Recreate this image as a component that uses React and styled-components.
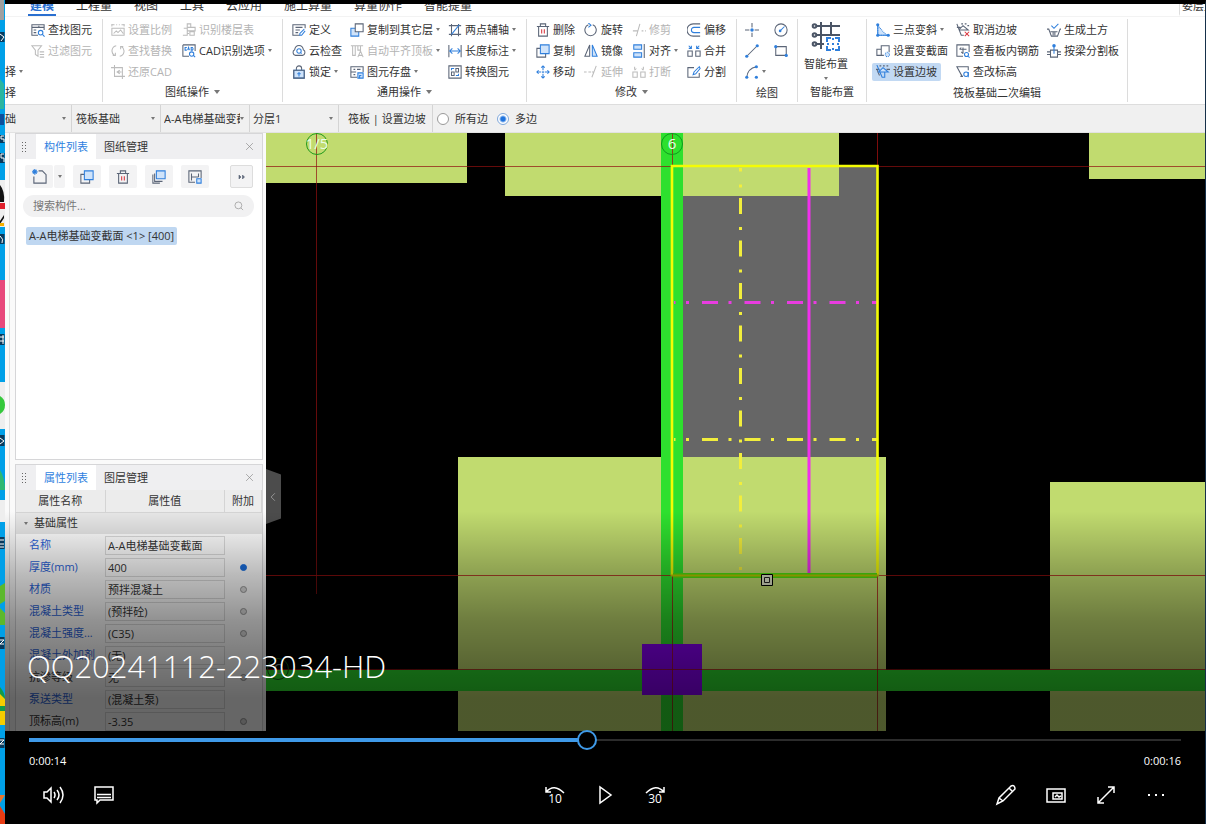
import React, { useState } from 'react';
import styled, { createGlobalStyle, css } from 'styled-components';

const GlobalStyle = createGlobalStyle`
  * {
    box-sizing: border-box;
  }
  body {
    margin: 0;
    background: #000;
    font-family: 'Open Sans', 'Noto Sans CJK SC', sans-serif;
    font-size: 11px;
    line-height: 16px;
    color: #333;
  }
  button, input, select {
    font: inherit;
    color: inherit;
    margin: 0;
    padding: 0;
    border: 0;
    background: none;
  }
`

/* ---------- icons ---------- */

const Svg = styled.svg`
  display: block;
  flex: none;
  width: ${props => props.$size || 14}px;
  height: ${props => props.$size || 14}px;
  fill: none;
  stroke: currentColor;
  stroke-width: 1.2;
  --accent: ${props => (props.$muted ? '#bcbcbc' : '#2f7fdc')};
  --tint: ${props => (props.$muted ? '#eee' : '#cfe3fa')};
  --danger: #d9363e;
  .a { stroke: var(--accent); }
  .d { stroke: var(--danger); }
  .t { stroke: var(--accent); fill: var(--tint); }
  .f { stroke: none; fill: var(--accent); }
  .w { fill: #fff; }
`

const icons = {
  find: <><path d="M8 14H1V2h14v6M1 5h14M3 8h3M3 11h3M9 3v2" /><circle className="a" cx="11" cy="11" r="2.6" /><path className="a" d="M13 13l2.5 2.5" /></>,
  filter: <path d="M1 2h11L8 7v7l-3-2V7zM10 9h5M10 12h5M10 15h5" />,
  scale: <path d="M1 4V1M15 4V1M1 2h3M12 2h3M6 2h1M9 2h1M1 6h14v8H1zM3 12l3-3 2 2 3-3 3 4" />,
  floors: <path d="M6 1h4v4H6zM2 6h4v8H1M10 5h5v4h-5M6 9h4M6 12h2M9 10h5v4H9z" />,
  replace: <path d="M6 2a6 6 0 0 0-2 11M2 13h3v-3M10 14a6 6 0 0 0 2-11M14 3h-3v3" />,
  cad: <><path d="M1 1h14v7M1 1v13h7" /><path className="a" d="M5.500 4h-2v3h2M6.500 7l1-3 1 3M10.500 4v3h1.500q1.500-1.500 0-3z" /><circle className="a" cx="11" cy="11.500" r="2.500" /><path className="a" d="M13 13l2 2" /></>,
  restore: <path d="M4 0v13h12M0 3h13v13M10 6l-3 2 3 2M7 8h5" />,
  define: <><path d="M9 14H1V2h14v4M4 5h8M4 8h5M4 11h3" /><path className="a" d="M14 7l-5 5v2h2l4-5" /></>,
  cloud: <><path d="M4 13a3.500 3.500 0 0 1-1-6.500C4 0 12 0 13 6.500A3.500 3.500 0 0 1 12 13z" /><circle className="a" cx="8" cy="8" r="2.500" /><path className="a" d="M10 10l1 1" /></>,
  lock: <><path d="M5 6V4a3 3 0 0 1 6 0v2" /><path className="t" d="M2 6h12v9H2z" /><path d="M2 6h12v9H2z" /><path className="a" d="M8 8v5M6 10h4" /></>,
  copyTo: <><path className="t" d="M1 6h9v9H1z" /><path className="w" d="M6 1h9v9H6z" /></>,
  alignTop: <path d="M1 2h14M3 2v11h3V2M9 2v5h3V2M9 15l3-7 3 7M10 13h4" />,
  save: <><path d="M8 14H1V2h14v6M1 8h6M4 5h2M8 5h4M4 11h2" /><path className="t" d="M9 9h6v6H9z" /><path className="a" d="M11 15v-3h2" /></>,
  axis: <><path d="M4 1v14M12 1v14M1 3h14M1 13h14" /><path className="a" d="M4 13L13 2" /></>,
  length: <><path d="M1 1v14M15 1v14" /><path className="a" d="M2 8h12M5 5L2 8l3 3M11 5l3 3-3 3" /></>,
  convert: <><path d="M1 1h14v14H1zM4 8h3v4H4zM9 4h3v4H9z" /><path className="a" d="M4 6V4h3M12 10v2H9" /></>,
  trash: <><path d="M1 4h14M5 4V1h6v3M3 4v11h10V4" /><path className="d" d="M6.500 7v5M9.500 7v5" /></>,
  copy: <><path d="M5 5H1v10h10v-4" /><path className="t" d="M5 1h10v10H5z" /></>,
  move: <><path className="a" d="M8 1v5M8 10v5M1 8h5M10 8h5M6 3l2-2 2 2M6 13l2 2 2-2M3 6L1 8l2 2M13 6l2 2-2 2" /><path className="a" d="M7 8h2M8 7v2" /></>,
  rotate: <><path d="M10 2a6.500 6.500 0 1 1-5 0" /><path className="a" d="M5 0l3 2.500L5 5" /></>,
  mirror: <><path d="M6.500 1v13H1z" /><path className="t" d="M9.500 1v13H15z" /></>,
  trim: <path d="M1 9h6M5 15L9 1M11 9h2M15 9h1" />,
  extend: <path d="M0 8h3M5 8h3M9 14L14 1M9 8h2" />,
  align: <><path className="t" d="M2 1h9v5H2zM2 10h9v5H2z" /><path d="M14 0v16" /></>,
  break: <path d="M1 8h5v6H1zM10 8h5v6h-5zM3 2v3M13 2v3M5 4L3 6M11 4l2 2" />,
  offset: <><path d="M15 1H7a7 7 0 0 0 0 14h8" /><path className="a" d="M15 5H8a3 3 0 0 0 0 6h7" /></>,
  merge: <><path d="M1 8h5v6H1zM10 8h5v6h-5z" /><path className="a" d="M2 2l3 3M14 2l-3 3M5 2v3H2M11 2v3h3" /></>,
  split: <><path d="M8 3H1v11h13V9" /><path className="a" d="M14 2l-6 6-1 3 3-1 5-6z" /></>,
  point: <><path d="M8 0v5M8 11v5M0 8h5M11 8h5" /><circle className="f" cx="8" cy="8" r="2" /></>,
  gauge: <><circle cx="8" cy="8" r="7" /><path className="a" d="M7 9l5-5" /><circle className="f" cx="7" cy="9" r="1.500" /></>,
  line: <><path d="M2 14L14 2" /><circle className="f" cx="2" cy="14" r="1.800" /><circle className="f" cx="14" cy="2" r="1.800" /></>,
  rect: <><path d="M2 3h12v10H2z" /><circle className="f" cx="2" cy="3" r="1.800" /><circle className="f" cx="14" cy="13" r="1.800" /></>,
  arc: <><path d="M2 14Q3 4 13 2" /><circle className="f" cx="2" cy="14" r="1.800" /><circle className="f" cx="13" cy="2" r="1.800" /><circle className="f" cx="13" cy="14" r="1.800" /></>,
  slope3: <><path className="t" d="M2 3l10 11H2z" strokeDasharray="1 1" /><path className="a" d="M2 1v13h13" /><circle className="f" cx="2" cy="14" r="1.800" /><circle className="f" cx="2" cy="2" r="1.800" /><circle className="f" cx="14" cy="14" r="1.800" /></>,
  section: <><path d="M9 13H1V6h5V2h9v7M6 6v7" /><circle className="t" cx="13" cy="12" r="2.500" strokeDasharray="1 1" /></>,
  slope: <><path d="M0 5h4M12 5h4M1 5l3 7M4 1h2M8 1h2M12 1h2" /><path className="t" d="M8 3l6 5H3z" /><path className="a" d="M1 0l6 14h3V8" /></>,
  slopeCancel: <><path d="M1 1l5 13h3M1 5h4M3 8l5-5 6 5H3M6 1h2M10 1h2M13 3h2" /><path className="d" d="M10 10l5 5M15 10l-5 5" /></>,
  rebar: <><path d="M8 14H1V1h14v8M4 6h8M4 6l2-2M8 4v7M8 11l-2-2" /><circle className="a" cx="12" cy="12" r="2.300" /><path className="a" d="M14 14l1.500 1.500" /></>,
  height: <><path d="M7 13L1 2h13v4M5 13h3" /><circle className="a" cx="11.500" cy="10.500" r="2.600" /><path className="a" d="M14 8v6" /></>,
  earth: <><path d="M0 7h2l3 8h7l3-8h1M4 10h8M7 10v4M9 10v4" /><path className="a" d="M5 3l3 3 5-5" /></>,
  beam: <><path d="M4 7h8v8H4zM0 9h4M0 12h4M12 9h4M12 12h4" /><circle className="f" cx="8" cy="2" r="2" /><path className="a" d="M8 3v8" /></>,
  newFile: <><path d="M7 2h4l4 4v9H2V8" /><path className="a" d="M3 0v6M0 3h6M1 1l4 4M5 1L1 5" /></>,
  stack: <><path className="w" d="M1 5v10h8" /><path d="M3 4v9h9" /><path className="t" d="M5 1h10v9H5z" /></>,
  sheet: <><path d="M8 14H1V1h14v8M4 4v8M4 8h8M12 4v4" /><path className="t" d="M10 10h5v5h-5z" /></>,
  search: <><circle cx="7" cy="7" r="5.500" /><path d="M11 11l3.500 3.500" /></>,
  close: <path d="M2 2l12 12M14 2L2 14" />,
  more: <path d="M2 4l4 4-4 4zM9 4l4 4-4 4z" fill="currentColor" />,
}

const Icon = ({ name, size, muted }) => (
  <Svg viewBox="0 0 16 16" $size={size} $muted={muted} aria-hidden="true">{icons[name]}</Svg>
)

const Caret = styled.i`
  flex: none;
  width: 0;
  height: 0;
  margin-left: ${props => props.$gap || 0}px;
  border: ${props => props.$size || 2}px solid transparent;
  border-top: ${props => (props.$size || 2) + 1}px solid #777;
  border-bottom: 0;
`

/* ---------- page ---------- */

const Page = styled.div`
  display: flex;
  height: 100vh;
  overflow: hidden;
  background: #000;
`
const DesktopEdge = styled.svg`
  flex: none;
  width: 5px;
  height: 100%;
  background: #00a0e8;
`
const Player = styled.main`
  flex: 1;
  min-width: 0;
  display: flex;
  flex-direction: column;
  border-top: 4px solid #000;
  border-right: 1px solid #16304a;
`
const Frame = styled.section`
  position: relative;
  flex: 1;
  min-height: 0;
  display: flex;
  flex-direction: column;
  overflow: hidden;
  background: #fff;
`
const Shade = styled.div`
  position: absolute;
  left: 0;
  right: 0;
  bottom: 0;
  height: 220px;
  pointer-events: none;
  background: linear-gradient(rgba(0, 0, 0, 0), rgba(0, 0, 0, 0.27) 29%, rgba(0, 0, 0, 0.43) 50%, rgba(0, 0, 0, 0.55) 73%, rgba(0, 0, 0, 0.6) 85%);
`
const VideoTitle = styled.h1`
  position: absolute;
  left: 22px;
  bottom: 41px;
  margin: 0;
  font-weight: 300;
  font-size: 31px;
  line-height: 48px;
  color: #fff;
  white-space: nowrap;
`

/* ---------- menu and ribbon ---------- */

const MenuBar = styled.nav`
  flex: none;
  display: flex;
  align-items: flex-end;
  gap: 18px;
  height: 12px;
  padding-left: 23px;
  overflow: hidden;
  font-size: 12px;
  white-space: nowrap;
`
const MenuTab = styled.button`
  padding: 0 2px 1px;
  line-height: 14px;
  border-bottom: 2px solid ${props => (props.$active ? '#2a6fd0' : 'transparent')};
  color: ${props => (props.$active ? '#2a6fd0' : '#333')};
  font-weight: ${props => (props.$active ? 700 : 400)};
`
const FloorTab = styled(MenuTab)`
  margin-left: auto;
  width: 26px;
  border-left: 1px solid #ddd;
  overflow: hidden;
  text-align: left;
  font-size: 11px;
`
const Ribbon = styled.div`
  flex: none;
  display: flex;
  height: 89px;
  padding: 2px 0;
  overflow: hidden;
  border-top: 1px solid #f3f3f3;
  border-bottom: 1px solid #ddd;
`
const Group = styled.div`
  flex: none;
  display: flex;
  flex-direction: column;
  width: ${props => props.$width}px;
  padding-left: ${props => props.$pad}px;
  border-right: 1px solid #dcdcdc;
`
const Columns = styled.div`
  display: grid;
  grid-template-columns: ${props => props.$cols};
  grid-template-rows: repeat(3, 21px);
  grid-auto-flow: column;
  align-items: center;
  justify-items: start;
`
const GroupLabel = styled.div`
  display: flex;
  align-items: center;
  justify-content: center;
  height: 21px;
  margin-top: ${props => (props.$low ? 2 : 0)}px;
  margin-left: -${props => props.$pad}px;
  white-space: nowrap;
`
const Tool = styled.button`
  display: flex;
  align-items: center;
  gap: 3px;
  height: 18px;
  white-space: nowrap;
  color: #5b6577;
  span {
    color: ${props => (props.disabled ? '#b4b4b4' : '#333')};
  }
  ${props => props.disabled && css`
    color: #bcbcbc;
  `}
  ${props => props.$pressed && css`
    margin-left: -4px;
    padding: 0 4px;
    border-radius: 2px;
    background: #c2d9f3;
  `}
`
const BigTool = styled.button`
  display: flex;
  flex-direction: column;
  align-items: center;
  gap: 5px;
  height: 63px;
  width: 44px;
  padding-top: 2px;
  white-space: nowrap;
`

const groups = [
  {
    width: 98, pad: 0, cols: '26px 1fr', label: '择', left: true,
    tools: [null, null, ['', '择', 'v'], ['find', '查找图元'], ['filter', '过滤图元', 'x']],
  },
  {
    width: 180, pad: 8, cols: '71px 1fr', label: '图纸操作', caret: true,
    tools: [['scale', '设置比例', 'x'], ['replace', '查找替换', 'x'], ['restore', '还原CAD', 'x'], ['floors', '识别楼层表', 'x'], ['cad', 'CAD识别选项', 'v']],
  },
  {
    width: 244, pad: 9, cols: '58px 98px 1fr', label: '通用操作', caret: true,
    tools: [['define', '定义'], ['cloud', '云检查'], ['lock', '锁定', 'v'], ['copyTo', '复制到其它层', 'v'], ['alignTop', '自动平齐顶板', 'xv'], ['save', '图元存盘', 'v'], ['axis', '两点辅轴', 'v'], ['length', '长度标注', 'v'], ['convert', '转换图元']],
  },
  {
    width: 210, pad: 9, cols: '48px 48px 55px 1fr', label: '修改', caret: true,
    tools: [['trash', '删除'], ['copy', '复制'], ['move', '移动'], ['rotate', '旋转'], ['mirror', '镜像'], ['extend', '延伸', 'x'], ['trim', '修剪', 'x'], ['align', '对齐', 'v'], ['break', '打断', 'x'], ['offset', '偏移'], ['merge', '合并'], ['split', '分割']],
  },
  {
    width: 61, pad: 8, cols: '29px 1fr', label: '绘图',
    tools: [['point', ''], ['line', ''], ['arc', '', 'v'], ['gauge', ''], ['rect', '']],
  },
  { width: 69, pad: 6, label: '智能布置', big: true },
  {
    width: 261, pad: 9, cols: '80px 91px 1fr', label: '筏板基础二次编辑',
    tools: [['slope3', '三点变斜', 'v'], ['section', '设置变截面'], ['slope', '设置边坡', 'p'], ['slopeCancel', '取消边坡'], ['rebar', '查看板内钢筋'], ['height', '查改标高'], ['earth', '生成土方'], ['beam', '按梁分割板']],
  },
]

const ToolButton = ({ tool }) => {
  if (!tool) return <i />
  const [icon, text, flags = ''] = tool
  const muted = flags.includes('x')
  return (
    <Tool disabled={muted} $pressed={flags.includes('p')} aria-label={text || icon}>
      {icon && <Icon name={icon} muted={muted} />}
      {text && <span>{text}</span>}
      {flags.includes('v') && <Caret />}
    </Tool>
  )
}

const LayoutIcon = () => (
  <Svg viewBox="0 0 30 30" $size={30} aria-hidden="true">
    <g strokeWidth="2" stroke="#4b5566">
      <circle cx="3.500" cy="5" r="1.800" /><circle cx="3.500" cy="14" r="1.800" /><circle cx="3.500" cy="23" r="1.800" />
      <path d="M5 5h24M5 14h24M5 23h8M10 1v27M20 1v13" />
    </g>
    <path className="a" strokeWidth="2" d="M16 21v-4h4M24 17h4v4M28 25v4h-4M20 29h-4v-4M22 17v2M22 27v2M16 23h2M26 23h2M21 23h2" />
  </Svg>
)

/* ---------- option bar ---------- */

const OptionBar = styled.div`
  flex: none;
  display: flex;
  height: 28px;
  background: #f0f0f0;
  border-bottom: 1px solid #e2e2e2;
`
const Picker = styled.label`
  position: relative;
  flex: none;
  display: flex;
  align-items: center;
  width: ${props => props.$width}px;
  border-right: 1px solid #d4d4d4;
  select {
    appearance: none;
    width: calc(100% - 9px);
    height: 100%;
    padding-left: ${props => props.$pad}px;
    text-overflow: clip;
    outline: 0;
  }
`
const Crumb = styled.span`
  flex: none;
  display: flex;
  align-items: center;
  width: 94px;
  padding-left: 9px;
  border-right: 1px solid #d4d4d4;
  white-space: nowrap;
`
const Radio = styled.label`
  display: flex;
  align-items: center;
  gap: 6px;
  margin-left: ${props => props.$left}px;
  white-space: nowrap;
  input {
    appearance: none;
    width: 12px;
    height: 12px;
    border: 1px solid #999;
    border-radius: 50%;
    background: #fff;
  }
  input:checked {
    border-color: #7fa8dc;
    background: radial-gradient(#1f73dd 0 2px, #fff 4px);
  }
`

/* ---------- side panels ---------- */

const Workspace = styled.div`
  flex: 1;
  min-height: 0;
  display: flex;
`
const Side = styled.aside`
  flex: none;
  display: flex;
  flex-direction: column;
  gap: 4px;
  width: 261px;
  padding: 0 3px 0 4px;
  background: #fafafa;
  overflow: hidden;
`
const Panel = styled.section`
  flex: none;
  height: ${props => props.$height};
  margin-left: 1px;
  border: 1px solid #d6d6d8;
  background: #fff;
`
const SideInner = styled.div`
  flex: 1;
  min-height: 0;
  display: flex;
  flex-direction: column;
  gap: 4px;
  padding-left: 4px;
  border-left: 1px solid #ddd;
  overflow: hidden;
`
const PanelHead = styled.header`
  display: flex;
  height: 25px;
  background: #efeff1;
`
const Grip = styled.i`
  align-self: center;
  width: 6px;
  height: 12px;
  margin: 0 9px 0 5px;
  background: radial-gradient(circle, #666 1px, transparent 1px) 0 0 / 3px 3px;
`
const PanelTab = styled.button`
  padding: 0 8px;
  background: ${props => (props.$active ? '#fff' : 'none')};
  color: ${props => (props.$active ? '#2f7fe0' : '#333')};
`
const CloseButton = styled.button`
  display: flex;
  align-items: center;
  margin-left: auto;
  padding: 0 8px;
  color: #888;
`
const PanelTools = styled.div`
  display: flex;
  gap: 8px;
  padding: 6px 9px 7px;
`
const SquareButton = styled.button`
  display: flex;
  align-items: center;
  justify-content: center;
  width: ${props => props.$width || 28}px;
  height: 23px;
  border-radius: 2px;
  background: #f3f3f4;
  color: #5b6577;
`
const MoreButton = styled(SquareButton)`
  margin-left: auto;
  border: 1px solid #ddd;
`
const SplitButton = styled.div`
  display: flex;
  gap: 1px;
`
const SearchBox = styled.label`
  display: flex;
  align-items: center;
  height: 22px;
  margin: 0 8px 0 7px;
  padding: 0 10px;
  border-radius: 11px;
  background: #f1f1f2;
  color: #999;
  input {
    flex: 1;
    min-width: 0;
    outline: 0;
  }
  input::placeholder {
    color: #777;
  }
`
const ComponentList = styled.ul`
  list-style: none;
  margin: 0;
  padding: 10px;
  li {
    width: max-content;
    padding: 1px 3px;
    border-radius: 2px;
    background: #bfd7f1;
  }
`
const PropTable = styled.table`
  width: 100%;
  table-layout: fixed;
  border-collapse: collapse;
  th {
    height: 22px;
    padding: 0;
    font-weight: 400;
    background: #ececec;
    border-right: 1px solid #d4d4d4;
    border-bottom: 1px solid #d4d4d4;
  }
  td {
    height: 22px;
    padding: 0;
  }
  input {
    display: block;
    width: 100%;
    height: 19px;
    padding: 0 2px;
    border: 1px solid #dcdcdc;
    outline: 0;
  }
`
const PropName = styled.td`
  padding-left: 13px !important;
  white-space: nowrap;
  overflow: hidden;
  color: ${props => (props.$linked ? '#2a62d8' : '#333')};
`
const SectionRow = styled.tr`
  background: #e6e6e6;
  td > div {
    display: flex;
    align-items: center;
    gap: 6px;
    padding-left: 8px;
  }
`
const Dot = styled.input.attrs({ type: 'checkbox' })`
  && {
    appearance: none;
    width: 7px;
    height: 7px;
    margin: 0 auto;
    padding: 0;
    border: 1px solid #999;
    border-radius: 50%;
    background: #ddd;
  }
  &&:checked {
    border-color: #1a6fe0;
    background: #1a6fe0;
  }
`

const properties = [
  ['名称', 'A-A电梯基础变截面', true, null],
  ['厚度(mm)', '400', true, true],
  ['材质', '预拌混凝土', true, false],
  ['混凝土类型', '(预拌砼)', true, false],
  ['混凝土强度...', '(C35)', true, false],
  ['混凝土外加剂', '(无)', true, null],
  ['抗渗等级', '无', false, false],
  ['泵送类型', '(混凝土泵)', true, null],
  ['顶标高(m)', '-3.35', false, false],
]

const ComponentPanel = () => (
  <Panel $height="327px">
    <PanelHead>
      <Grip />
      <PanelTab $active>构件列表</PanelTab>
      <PanelTab>图纸管理</PanelTab>
      <CloseButton aria-label="关闭"><Icon name="close" size={9} /></CloseButton>
    </PanelHead>
    <PanelTools>
      <SplitButton>
        <SquareButton aria-label="新建"><Icon name="newFile" size={15} /></SquareButton>
        <SquareButton aria-label="新建选项" $width={11}><Caret /></SquareButton>
      </SplitButton>
      <SquareButton aria-label="复制"><Icon name="copy" size={14} /></SquareButton>
      <SquareButton aria-label="删除"><Icon name="trash" size={14} /></SquareButton>
      <SquareButton aria-label="层间复制"><Icon name="stack" size={14} /></SquareButton>
      <SquareButton aria-label="存档"><Icon name="sheet" size={14} /></SquareButton>
      <MoreButton aria-label="更多" $width={23}><Icon name="more" size={8} /></MoreButton>
    </PanelTools>
    <SearchBox>
      <input placeholder="搜索构件..." aria-label="搜索构件" />
      <Icon name="search" size={10} />
    </SearchBox>
    <ComponentList>
      <li>{'A-A电梯基础变截面 <1> [400]'}</li>
    </ComponentList>
  </Panel>
)

const PropertyPanel = () => (
  <Panel $height="auto">
    <PanelHead>
      <Grip />
      <PanelTab $active>属性列表</PanelTab>
      <PanelTab>图层管理</PanelTab>
      <CloseButton aria-label="关闭"><Icon name="close" size={9} /></CloseButton>
    </PanelHead>
    <PropTable>
      <colgroup>
        <col width="89" />
        <col />
        <col width="37" />
      </colgroup>
      <thead>
        <tr><th>属性名称</th><th>属性值</th><th>附加</th></tr>
      </thead>
      <tbody>
        <SectionRow>
          <td colSpan={3}><div><Caret />基础属性</div></td>
        </SectionRow>
        {properties.map(([name, value, linked, extra]) => (
          <tr key={name}>
            <PropName $linked={linked}>{name}</PropName>
            <td><input defaultValue={value} aria-label={name} /></td>
            <td>{extra !== null && <Dot defaultChecked={extra} aria-label={name + '附加'} />}</td>
          </tr>
        ))}
      </tbody>
    </PropTable>
  </Panel>
)

/* ---------- drawing ---------- */

const CanvasArea = styled.div`
  position: relative;
  flex: 1;
  min-width: 0;
  background: #000;
  > svg {
    display: block;
    width: 100%;
    height: 100%;
  }
`
const CollapseHandle = styled.button`
  position: absolute;
  left: 0;
  top: 336px;
  width: 15px;
  height: 55px;
  background: #4c4c4c;
  clip-path: polygon(0 0, 100% 10%, 100% 90%, 0 100%);
  color: #aaa;
  svg {
    margin-left: 2px;
  }
`

const Drawing = () => (
  <svg viewBox="266 133 939 598" preserveAspectRatio="xMinYMin slice">
    <path fill="#666" d="M672 166h206v410H672z" />
    <path fill="#c1db6f" d="M266 133h201v50H266zM505 133h334v63H505zM1089 133h117v46h-117zM458 457h428v274H458zM1050 482h156v249h-156z" />
    <path fill="#2ee02e" d="M661 133h22v598h-22zM266 670h940v21H266z" />
    <path fill="#8a00f8" d="M642 644h60v51h-60z" />
    <path stroke="#a81010" strokeOpacity="0.75" fill="none" d="M266 575.500h940M266 669.500h940M877.500 133v598M672.500 133v598" />
    <path stroke="#901010" strokeOpacity="0.7" fill="none" d="M266 166.500h940M316.500 133v461" />
    <g fill="none" strokeWidth="3">
      <path stroke="#f2ee3c" d="M740.500 168v406" strokeDasharray="16 13 3 10.500" strokeDashoffset="12.500" />
      <path stroke="#f2ee3c" d="M674 439.500h204" strokeDasharray="16 10.500 3 13" strokeDashoffset="14.500" />
      <path stroke="#e83ce0" d="M674 302.500h204" strokeDasharray="16 10.500 3 13" strokeDashoffset="14.500" />
      <path stroke="#f030ec" d="M809 168v406" />
      <path stroke="#f4fc04" strokeWidth="2.600" d="M672 576V166h205.500v410" />
    </g>
    <path stroke="#4ce010" strokeWidth="5" d="M673 575.500h204" />
    <path stroke="#b8c800" strokeWidth="2" d="M671 575.500h208" />
    <g fontSize="15" textAnchor="middle" fill="#e8ffe8">
      <circle cx="672" cy="144" r="10.500" fill="none" stroke="#0f9a1c" />
      <text x="672" y="149">6</text>
      <circle cx="317" cy="144" r="10.500" fill="none" stroke="#1f9a1c" />
      <text x="317" y="149">1/5</text>
      <circle cx="278" cy="669" r="10.500" fill="none" stroke="#0f5a10" />
      <text x="278" y="674" fill="#9aa89a">C</text>
    </g>
    <path fill="#dfe3c8" stroke="#000" d="M761.500 574.500h11v11h-11z" />
    <path fill="#e4e8d0" stroke="#222" d="M764.500 577.500h5v5h-5z" />
  </svg>
)

/* ---------- player controls ---------- */

const Controls = styled.footer`
  flex: none;
  height: 93px;
  padding: 0 24px;
  color: #fff;
`
const Seek = styled.input.attrs({ type: 'range', min: 0, max: 1000 })`
  appearance: none;
  position: relative;
  display: block;
  width: 100%;
  height: 20px;
  margin-top: -1px;
  outline: 0;
  background:
    linear-gradient(#3f9ae8, #3f9ae8) 0 50% / ${props => props.value / 10}% 4px no-repeat,
    linear-gradient(#2c2c2c, #2c2c2c) 0 50% / 100% 2px no-repeat;
  &::-webkit-slider-thumb {
    appearance: none;
    width: 20px;
    height: 20px;
    border: 2px solid #3f9ae8;
    border-radius: 50%;
    background: #000;
  }
`
const Times = styled.div`
  display: flex;
  justify-content: space-between;
  margin-top: 3px;
`
const ControlRow = styled.div`
  display: grid;
  grid-template-columns: 1fr auto 1fr;
  margin-top: 6px;
`
const ControlSet = styled.div`
  display: flex;
  justify-content: ${props => props.$justify || 'flex-start'};
`
const ControlButton = styled.button`
  display: flex;
  align-items: center;
  justify-content: center;
  width: 50px;
  height: 40px;
  svg {
    width: 24px;
    height: 24px;
    fill: none;
    stroke: #fff;
    stroke-width: 1.5;
  }
  text {
    fill: #fff;
    stroke: none;
    font-size: 12px;
    text-anchor: middle;
  }
`

const ControlIcon = ({ label, children }) => (
  <ControlButton aria-label={label}>
    <svg viewBox="0 0 24 24">{children}</svg>
  </ControlButton>
)

const App = () => {
  const [position, setPosition] = useState(484)

  return (
    <Page>
      <GlobalStyle />
      <DesktopEdge viewBox="0 0 5 824" preserveAspectRatio="xMinYMin slice">
        <path fill="#a0a0a0" d="M0 0h4v20H0z" />
        <path fill="#2bb5a0" d="M0 79l4 5v25H0z" />
        <path fill="#0b4f9c" d="M0 114h4v11H0z" />
        <path fill="#eee" d="M0 180h5v47H0zM0 382h5v47H0zM0 500h5v22H0z" />
        <path fill="#111" d="M0 185q5 6 4 17H0zM0 221l4-6v3l-4 6z" />
        <path fill="#e0202c" d="M0 203h5v6H0z" />
        <path fill="#f5b000" d="M0 223h4v3H0z" />
        <path fill="#e8487c" d="M0 280h5v48H0z" />
        <path fill="#35c83c" d="M0 396q5 3 5 9t-5 9z" />
        <path fill="#2eb872" d="M0 470q5 8 5 20H0z" />
        <path fill="#5cb82c" d="M0 586l5-3v18l-5 3zM0 608l5 5v12H0z" />
        <path fill="#159a48" d="M0 687q5 6 5 12v25H0z" />
        <path fill="#f5cc00" d="M0 694l5 5v7H0zM0 711h5v14H0z" />
        <path fill="#e8742c" d="M0 795h5l-5 8z" />
        <path fill="#e83c14" d="M0 806l5 8v10H0z" />
        <g fill="none">
          <path stroke="#0a3a5c" strokeWidth="5" d="M2 32v10M2 135v8M2 153v10M2 234v10M2 334v11M2 435v11M2 537v12M2 637v12M2 738v10" />
          <path stroke="#fff" d="M0 34l4 3-3 4M4 136H1v3h3v3M4 154H1v4h3v4M0 236q4 3 2 7M0 337h4M0 341h4M3 335v9M0 438l4 3-4 3M0 540h4M0 544h4M0 547h4M0 640h4l-4 4h4M0 740h4l-4 4h4" />
        </g>
      </DesktopEdge>
      <Player>
        <Frame>
          <MenuBar>
            <MenuTab $active>建模</MenuTab>
            {['工程量', '视图', '工具', '云应用', '施工算量', '算量协作', '智能提量'].map(tab => (
              <MenuTab key={tab}>{tab}</MenuTab>
            ))}
            <FloorTab>娄层土</FloorTab>
          </MenuBar>
          <Ribbon>
            {groups.map(group => (
              <Group key={group.label} $width={group.width} $pad={group.pad}>
                {group.big ? (
                  <BigTool>
                    <LayoutIcon />
                    <span>智能布置</span>
                    <Caret />
                  </BigTool>
                ) : (
                  <Columns $cols={group.cols}>
                    {group.tools.map((tool, i) => <ToolButton key={i} tool={tool} />)}
                  </Columns>
                )}
                <GroupLabel
                  $pad={group.pad}
                  $low={!group.caret}
                  style={group.left && { justifyContent: 'flex-start' }}
                >
                  {group.label}
                  {group.caret && <Caret $size={3} $gap={5} />}
                </GroupLabel>
              </Group>
            ))}
          </Ribbon>
          <OptionBar>
            <Picker $width={67} $pad={0}><select aria-label="类别"><option>础</option></select><Caret /></Picker>
            <Picker $width={89} $pad={4}><select aria-label="构件类型"><option>筏板基础</option></select><Caret /></Picker>
            <Picker $width={89} $pad={3}><select aria-label="构件"><option>A-A电梯基础变截面</option></select><Caret /></Picker>
            <Picker $width={89} $pad={3}><select aria-label="分层"><option>分层1</option></select><Caret /></Picker>
            <Crumb>筏板 | 设置边坡</Crumb>
            <Radio $left={4}><input type="radio" name="edge" />所有边</Radio>
            <Radio $left={9}><input type="radio" name="edge" defaultChecked />多边</Radio>
          </OptionBar>
          <Workspace>
            <Side>
              <SideInner>
                <ComponentPanel />
                <PropertyPanel />
              </SideInner>
            </Side>
            <CanvasArea>
              <Drawing />
              <CollapseHandle aria-label="收起"><Svg viewBox="0 0 16 16" $size={10}><path d="M11 2L5 8l6 6" /></Svg></CollapseHandle>
            </CanvasArea>
          </Workspace>
          <Shade />
          <VideoTitle>QQ20241112-223034-HD</VideoTitle>
        </Frame>
        <Controls>
          <Seek value={position} onChange={e => setPosition(Number(e.target.value))} aria-label="进度" />
          <Times><span>0:00:14</span><span>0:00:16</span></Times>
          <ControlRow>
            <ControlSet>
              <ControlIcon label="音量">
                <path d="M2 9h3l4-4v14l-4-4H2zM12 9q2 3 0 6M15 7q4 5 0 10M18 4q6 8 0 16" />
              </ControlIcon>
              <ControlIcon label="字幕">
                <path d="M3 4h18v13H8l-3 3v-3H3zM5 11.500h14M5 14.500h14" />
              </ControlIcon>
            </ControlSet>
            <ControlSet>
              <ControlIcon label="后退10秒">
                <path d="M3 4v5h5M3 9q8-9 18 1" />
                <text x="12" y="20">10</text>
              </ControlIcon>
              <ControlIcon label="播放">
                <path d="M7 4v16l11-8z" />
              </ControlIcon>
              <ControlIcon label="前进30秒">
                <path d="M21 4v5h-5M21 9q-8-9-18 1" />
                <text x="12" y="20">30</text>
              </ControlIcon>
            </ControlSet>
            <ControlSet $justify="flex-end">
              <ControlIcon label="编辑">
                <path d="M3 21l2-6L17 3q2-1 3 0t1 3L9 18zM15 5l4 4M5 15l4 3" />
              </ControlIcon>
              <ControlIcon label="画中画">
                <path d="M3 6h18v13H3zM9 10h9v6H9z" />
                <path d="M11 14l2-2 2 2 2-1" />
              </ControlIcon>
              <ControlIcon label="全屏">
                <path d="M4 20L20 4M14 4h6v6M4 14v6h6" />
              </ControlIcon>
              <ControlIcon label="更多">
                <path d="M4 12h2M11 12h2M18 12h2" strokeWidth="2" />
              </ControlIcon>
            </ControlSet>
          </ControlRow>
        </Controls>
      </Player>
    </Page>
  )
}

export default App
